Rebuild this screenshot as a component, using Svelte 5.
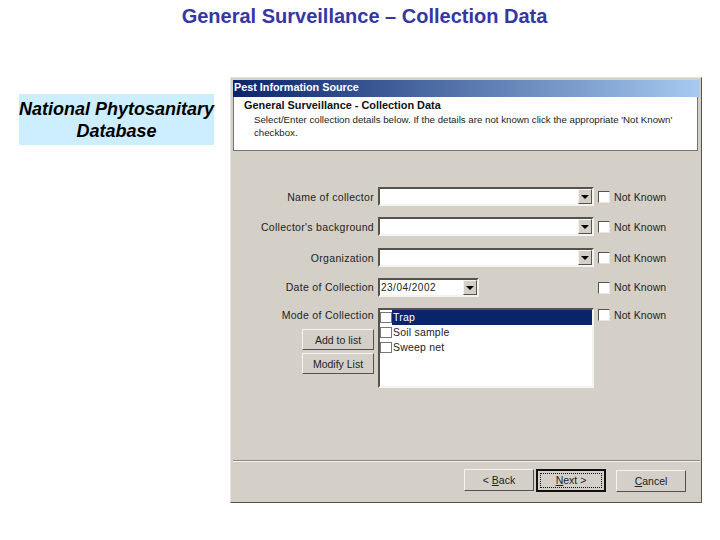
<script>
  const combos = [
    { label: "Name of collector" },
    { label: "Collector's background" },
    { label: "Organization" }
  ];
  const modes = ["Trap", "Soil sample", "Sweep net"];
</script>

<div class="page">
  <h1>General Surveillance – Collection Data</h1>
  <div class="content">
    <div class="side">National Phytosanitary<br />Database</div>

    <div class="window">
      <div class="titlebar">Pest Information Source</div>
      <div class="head">
        <h2>General Surveillance - Collection Data</h2>
        <p>Select/Enter collection details below. If the details are not known click the appropriate 'Not Known' checkbox.</p>
      </div>

      <div class="form">
        {#each combos as c}
          <div class="row">
            <span class="lbl">{c.label}</span>
            <div class="combo field">
              <span class="value"></span>
              <span class="arrow"><i></i></span>
            </div>
            <span class="check"></span>
            <span class="nk">Not Known</span>
          </div>
        {/each}

        <div class="row date-row">
          <span class="lbl">Date of Collection</span>
          <div class="control">
            <div class="date field">
              <span class="value">23/04/2002</span>
              <span class="arrow"><i></i></span>
            </div>
          </div>
          <span class="check"></span>
          <span class="nk">Not Known</span>
        </div>

        <div class="row list-row">
          <div class="left">
            <span class="lbl">Mode of Collection</span>
            <button class="btn add">Add to list</button>
            <button class="btn">Modify List</button>
          </div>
          <div class="list field">
            {#each modes as m, i}
              <div class="item">
                <span class="check small"></span>
                <span class="text" class:sel={i === 0}>{m}</span>
              </div>
            {/each}
          </div>
          <span class="check"></span>
          <span class="nk">Not Known</span>
        </div>
      </div>

      <div class="footer">
        <button class="btn nav"><span>&lt; <u>B</u>ack</span></button>
        <button class="btn nav default"><span class="focus"><u>N</u>ext &gt;</span></button>
        <button class="btn nav cancel"><span><u>C</u>ancel</span></button>
      </div>
    </div>
  </div>
</div>

<style>
  :global(body) {
    margin: 0;
    background: #fff;
  }

  .page {
    width: 720px;
    height: 540px;
    overflow: hidden;
    font-family: "Liberation Sans", Arial, sans-serif;
  }

  h1 {
    margin: 0;
    padding-top: 5px;
    height: 77px;
    box-sizing: border-box;
    font-size: 20px;
    line-height: 22px;
    font-weight: bold;
    text-align: center;
    color: #3636a4;
    width: 729px;
  }

  .content {
    display: flex;
    align-items: flex-start;
    padding-left: 19px;
  }

  .side {
    width: 195px;
    height: 51px;
    margin-top: 17px;
    margin-right: 16px;
    background: #cceeff;
    color: #000;
    font-size: 18px;
    line-height: 22px;
    padding-top: 4px;
    box-sizing: border-box;
    font-weight: bold;
    font-style: italic;
    text-align: center;
    white-space: nowrap;
  }

  .window {
    width: 472px;
    height: 426px;
    box-sizing: border-box;
    padding: 2px 1px 3px 2px;
    background: #d4d0c8;
    border: 1px solid;
    border-color: #e4e2dc #55534e #55534e #e4e2dc;
    display: flex;
    flex-direction: column;
    font-size: 10.5px;
    color: #222;
  }

  .titlebar {
    height: 17px;
    flex: none;
    background: linear-gradient(90deg, #0a246a, #a6caf0);
    color: #fff;
    font-weight: bold;
    font-size: 10.8px;
    line-height: 15px;
    padding-left: 1px;
  }

  .head {
    height: 54px;
    flex: none;
    box-sizing: border-box;
    margin-right: 2px;
    background: #fff;
    border-bottom: 1px solid #77756f;
    border-right: 1px solid #77756f;
    border-left: 1px solid #77756f;
    padding: 1px 0 0 10px;
  }

  h2 {
    margin: 0;
    font-size: 10.9px;
    line-height: 15px;
    color: #111;
  }

  .head p {
    margin: 0;
    padding-left: 10px;
    width: 424px;
    font-size: 9.7px;
    line-height: 13px;
    color: #222;
  }

  .form {
    flex: 1;
    padding-top: 36px;
    display: flex;
    flex-direction: column;
  }

  .row {
    display: grid;
    grid-template-columns: 141px 216px 12px auto;
    align-items: center;
    column-gap: 4px;
    height: 19px;
    margin-bottom: 11px;
  }

  .row:nth-child(2) {
    margin-bottom: 12px;
  }

  .lbl {
    text-align: right;
    white-space: nowrap;
    letter-spacing: 0.3px;
  }

  .date-row .lbl,
  .date-row .nk {
    padding-bottom: 2px;
  }

  .field {
    background: #fff;
    box-sizing: border-box;
    border: 2px solid;
    border-color: #55534e #f4f3f0 #f4f3f0 #55534e;
  }

  .combo,
  .date {
    height: 19px;
    display: flex;
    align-items: stretch;
    justify-content: space-between;
  }

  .control {
    display: flex;
  }

  .date {
    width: 101px;
  }

  .value {
    padding-left: 1px;
    line-height: 16px;
    font-size: 10px;
    letter-spacing: 0.5px;
  }

  .arrow {
    width: 14px;
    background: #d4d0c8;
    border: 1px solid;
    border-color: #f4f3f0 #55534e #55534e #f4f3f0;
    box-sizing: border-box;
    display: flex;
    align-items: center;
    justify-content: center;
  }

  .arrow i {
    border-left: 4px solid transparent;
    border-right: 4px solid transparent;
    border-top: 4px solid #000;
  }

  .check {
    display: block;
    width: 12px;
    height: 12px;
    box-sizing: border-box;
    background: #fff;
    border: 1px solid;
    border-color: #55534e #e8e6e1 #e8e6e1 #55534e;
  }

  .check.small {
    border-color: #777;
    flex: none;
    width: 12px;
    height: 11px;
  }

  .nk {
    white-space: nowrap;
    letter-spacing: 0.1px;
  }

  .list-row {
    height: 81px;
    align-items: start;
  }

  .list-row .check {
    margin-top: 1px;
  }

  .list-row .nk {
    line-height: 14px;
  }

  .list-row .check.small {
    margin-top: 0;
  }

  .left {
    display: flex;
    flex-direction: column;
    align-items: flex-end;
  }

  .left .lbl {
    line-height: 14px;
    margin-bottom: 7px;
  }

  .btn {
    display: block;
    width: 72px;
    height: 21px;
    padding: 0;
    margin: 0;
    box-sizing: border-box;
    background: #d4d0c8;
    border: 1px solid;
    border-color: #f4f3f0 #55534e #55534e #f4f3f0;
    font-family: inherit;
    font-size: 10.5px;
    color: #222;
  }

  .add {
    margin-bottom: 3px;
  }

  .list {
    height: 80px;
    border-width: 1px 2px 2px 2px;
    border-top: 2px solid #55534e;
  }

  .item {
    height: 15px;
    display: flex;
    align-items: center;
    gap: 0;
  }

  .text {
    flex: 1;
    padding-left: 1px;
    line-height: 15px;
    letter-spacing: 0.2px;
  }

  .sel {
    background: #0a246a;
    color: #fff;
  }

  .footer {
    flex: none;
    height: 39px;
    border-top: 1px solid #8a8880;
    box-shadow: inset 0 1px 0 #f4f3f0;
    display: flex;
    align-items: flex-start;
    padding: 8px 0 0 231px;
    box-sizing: border-box;
  }

  .nav {
    width: 70px;
    height: 22px;
    font-size: 10.5px;
    margin-right: 2px;
    padding: 0;
  }

  .nav.default {
    height: 23px;
    border: 2px solid #111;
    padding: 2px;
  }

  .focus {
    display: block;
    height: 100%;
    box-sizing: border-box;
    border: 1px dotted #111;
    line-height: 13px;
  }

  .nav.cancel {
    margin-left: 8px;
    margin-top: 1px;
  }
</style>
